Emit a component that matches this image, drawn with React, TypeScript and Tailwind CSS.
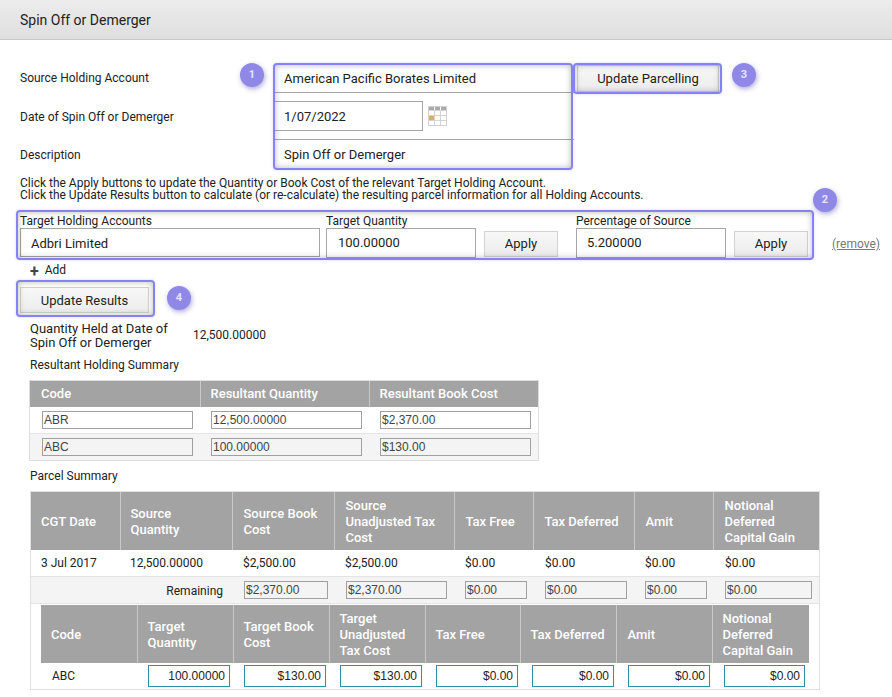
import { ReactNode } from 'react';

const parcelWidths = [89, 112, 102, 120, 79, 101, 79, 107];
const targetWidths = [96, 96, 96, 96, 95, 96, 96, 96];

function Badge({ n, className }: { n: number; className: string }) {
  return (
    <div className={`absolute flex h-6 w-6 items-center justify-center rounded-full bg-[#8f88e6] text-[11px] font-bold text-[#e6e4ff] shadow-[1px_2px_5px_rgba(80,70,170,0.45)] ${className}`}>
      {n}
    </div>
  );
}

function Highlight({ className }: { className: string }) {
  return (
    <div className={`pointer-events-none absolute rounded-[4px] border-2 border-[#8583f3] shadow-[inset_0_0_6px_rgba(0,0,0,0.28),0_0_3px_rgba(133,131,243,0.35)] ${className}`} />
  );
}

function Button({ children, className }: { children: ReactNode; className: string }) {
  return (
    <button className={`border border-[#d2d2d2] bg-gradient-to-b from-[#f8f8f8] to-[#ececec] text-[13px] text-[#222] ${className}`}>
      {children}
    </button>
  );
}

function GreyInput({ value, w }: { value: string; w: string }) {
  return (
    <input
      readOnly
      value={value}
      className={`h-[18px] border border-[#a0a0a0] bg-[#f4f4f4] pl-[1px] font-['Liberation_Sans',sans-serif] text-[12px] text-[#444] outline-none ${w}`}
    />
  );
}

function WhiteInput({ value }: { value: string }) {
  return (
    <input
      readOnly
      value={value}
      className="h-[18px] w-[151px] border border-[#a0a0a0] bg-white pl-[1px] font-['Liberation_Sans',sans-serif] text-[12px] text-[#444] outline-none"
    />
  );
}

function BlueInput({ value, w }: { value: string; w: string }) {
  return (
    <input
      readOnly
      value={value}
      className={`h-[22px] border border-[#2f8fa5] bg-white pr-[4px] text-right font-['Liberation_Sans',sans-serif] text-[12px] text-[#222] outline-none ${w}`}
    />
  );
}

function Th({ children, w, pl = 'pl-[10px]', pt = 'pt-[2px]' }: { children: ReactNode; w?: number; pl?: string; pt?: string }) {
  return (
    <th
      style={w ? { width: w } : undefined}
      className={`border-r border-[#c8c8c8] bg-[#a3a3a3] pr-1 text-left align-middle text-[13px] leading-4 font-medium text-white last:border-r-0 ${pl} ${pt}`}
    >
      {children}
    </th>
  );
}

function CalendarIcon() {
  return (
    <svg width="20" height="20" viewBox="0 0 20 20" className="ml-[5px]">
      <rect x="0.5" y="0.5" width="18" height="19" fill="#fff" stroke="#d0d0d0" />
      <rect x="1" y="1" width="5" height="3" fill="#aaa" />
      <rect x="7" y="1" width="5" height="3" fill="#aaa" />
      <rect x="13" y="1" width="5" height="3" fill="#aaa" />
      <path d="M1 4.5h17M1 9.5h17M1 14.5h17M6.5 4v15M12.5 4v15" stroke="#d4d4d4" fill="none" />
      <rect x="1" y="10" width="5" height="4" fill="#d9b552" />
    </svg>
  );
}

export default function App() {
  return (
    <div className="relative h-[697px] w-[892px] overflow-hidden bg-white font-['Roboto',sans-serif] text-[12px] text-[#222]">
      <div className="flex h-10 items-center border-b border-[#c6c6c6] bg-gradient-to-b from-[#ececec] to-[#dfdfdf] pt-[2px] pl-5 text-[14px] text-[#222]">
        Spin Off or Demerger
      </div>

      {/* Source / date / description */}
      <div className="mt-[23px] flex pl-5">
        <div className="w-[254px]">
          <div className="flex h-[30px] items-center">Source Holding Account</div>
          <div className="flex h-[47px] items-center">Date of Spin Off or Demerger</div>
          <div className="flex h-[29px] items-center">Description</div>
        </div>
        <div className="w-[300px] text-[13px]">
          <div className="flex h-[30px] items-center border-b border-[#a6a6a6] pt-[2px] pl-[10px]">American Pacific Borates Limited</div>
          <div className="flex h-[47px] items-center border-b border-[#a6a6a6]">
            <div className="flex h-[30px] w-[149px] items-center border border-[#a6a6a6] pt-[2px] pl-[9px]">1/07/2022</div>
            <CalendarIcon />
          </div>
          <div className="flex h-[29px] items-center pl-[10px]">Spin Off or Demerger</div>
        </div>
        <Button className="mt-[2px] ml-[3px] h-[27px] w-[142px]">Update Parcelling</Button>
      </div>

      <div className="mt-[8px] pl-5 leading-3">
        <p>Click the Apply buttons to update the Quantity or Book Cost of the relevant Target Holding Account.</p>
        <p>Click the Update Results button to calculate (or re-calculate) the resulting parcel information for all Holding Accounts.</p>
      </div>

      {/* Target holding row */}
      <div className="mt-[13px] flex items-start pl-5">
        <div className="w-[306px]">
          <div className="h-[14px] leading-[14px]">Target Holding Accounts</div>
          <div className="flex h-[29px] w-[300px] items-center border border-[#a6a6a6] pt-[2px] pl-[10px] text-[13px]">Adbri Limited</div>
        </div>
        <div className="w-[158px]">
          <div className="h-[14px] leading-[14px]">Target Quantity</div>
          <div className="flex h-[30px] w-[150px] items-center border border-[#a6a6a6] pl-[11px] text-[13px]">100.00000</div>
        </div>
        <Button className="mt-[17px] h-[26px] w-[74px]">Apply</Button>
        <div className="ml-[18px] w-[158px]">
          <div className="h-[14px] leading-[14px]">Percentage of Source</div>
          <div className="flex h-[30px] w-[150px] items-center border border-[#a6a6a6] pl-[10px] text-[13px]">5.200000</div>
        </div>
        <Button className="mt-[17px] h-[26px] w-[74px]">Apply</Button>
        <a className="mt-[21px] ml-[24px] text-[#777] underline">(remove)</a>
      </div>

      <div className="mt-[4px] flex h-[15px] items-center pl-[30px]">
        <span className="mt-[5px] text-[16px] font-bold text-[#444]">+</span>
        <span className="ml-[6px]">Add</span>
      </div>

      <div className="mt-[10px] pl-5">
        <Button className="h-[26px] w-[129px] pt-[2px]">Update Results</Button>
      </div>

      <div className="mt-[9px] flex items-center pl-[30px] text-[#222]">
        <div className="w-[163px] text-[13px] leading-[14px]">
          Quantity Held at Date of
          <br />
          Spin Off or Demerger
        </div>
        <div className="mb-[2px]">12,500.00000</div>
      </div>

      <div className="mt-[6px] pl-[30px]">Resultant Holding Summary</div>

      {/* Resultant summary */}
      <div className="mt-[6px] ml-[29px] w-[510px] border border-[#dedede]">
        <table className="w-full table-fixed border-collapse">
          <thead>
            <tr className="h-[26px]">
              <Th w={170} pl="pl-[11px]" pt="pt-0">Code</Th>
              <Th w={169} pt="pt-0">Resultant Quantity</Th>
              <Th pt="pt-0">Resultant Book Cost</Th>
            </tr>
          </thead>
          <tbody>
            <tr className="h-[26px] border-b border-[#e4e4e4]">
              <td className="pl-[12px]"><WhiteInput value="ABR" /></td>
              <td className="pl-[11px]"><WhiteInput value="12,500.00000" /></td>
              <td className="pl-[11px]"><WhiteInput value="$2,370.00" /></td>
            </tr>
            <tr className="h-[27px] bg-[#f4f4f4]">
              <td className="pl-[12px]"><GreyInput value="ABC" w="w-[151px]" /></td>
              <td className="pl-[11px]"><GreyInput value="100.00000" w="w-[151px]" /></td>
              <td className="pl-[11px]"><GreyInput value="$130.00" w="w-[151px]" /></td>
            </tr>
          </tbody>
        </table>
      </div>

      <div className="mt-[8px] pl-[30px] leading-[14px]">Parcel Summary</div>

      {/* Parcel summary */}
      <div className="mt-[8px] ml-[30px] w-[790px] border border-[#e0e0e0]">
        <table className="w-full table-fixed border-collapse">
          <thead>
            <tr className="h-[58px]">
              <Th w={parcelWidths[0]}>CGT Date</Th>
              <Th w={parcelWidths[1]}>Source<br />Quantity</Th>
              <Th w={parcelWidths[2]} pl="pl-[11px]">Source Book Cost</Th>
              <Th w={parcelWidths[3]} pl="pl-[11px]">Source Unadjusted Tax Cost</Th>
              <Th w={parcelWidths[4]} pl="pl-[11px]">Tax Free</Th>
              <Th w={parcelWidths[5]} pl="pl-[11px]">Tax Deferred</Th>
              <Th w={parcelWidths[6]} pl="pl-[11px]">Amit</Th>
              <Th pl="pl-[11px]">Notional Deferred Capital Gain</Th>
            </tr>
          </thead>
          <tbody>
            <tr className="h-[26px] border-b border-[#e4e4e4]">
              <td className="pl-[10px]">3 Jul 2017</td>
              <td className="pl-[10px]">12,500.00000</td>
              <td className="pl-[11px]">$2,500.00</td>
              <td className="pl-[11px]">$2,500.00</td>
              <td className="pl-[11px]">$0.00</td>
              <td className="pl-[12px]">$0.00</td>
              <td className="pl-[11px]">$0.00</td>
              <td className="pl-[12px]">$0.00</td>
            </tr>
            <tr className="h-[27px] border-b border-[#e4e4e4] bg-[#f4f4f4]">
              <td colSpan={2} className="pt-[2px] pr-[9px] text-right">Remaining</td>
              <td className="pl-[12px]"><GreyInput value="$2,370.00" w="w-[84px]" /></td>
              <td className="pl-[12px]"><GreyInput value="$2,370.00" w="w-[101px]" /></td>
              <td className="pl-[11px]"><GreyInput value="$0.00" w="w-[62px]" /></td>
              <td className="pl-[12px]"><GreyInput value="$0.00" w="w-[82px]" /></td>
              <td className="pl-[11px]"><GreyInput value="$0.00" w="w-[62px]" /></td>
              <td className="pl-[12px]"><GreyInput value="$0.00" w="w-[87px]" /></td>
            </tr>
            <tr>
              <td colSpan={8} className="pt-[1px] pr-[10px] pl-[10px]">
                <table className="w-[768px] table-fixed border-collapse">
                  <thead>
                    <tr className="h-[58px]">
                      <Th w={targetWidths[0]}>Code</Th>
                      <Th w={targetWidths[1]}>Target Quantity</Th>
                      <Th w={targetWidths[2]}>Target Book Cost</Th>
                      <Th w={targetWidths[3]}>Target Unadjusted Tax Cost</Th>
                      <Th w={targetWidths[4]}>Tax Free</Th>
                      <Th w={targetWidths[5]}>Tax Deferred</Th>
                      <Th w={targetWidths[6]} pl="pl-[11px]">Amit</Th>
                      <Th>Notional Deferred Capital Gain</Th>
                    </tr>
                  </thead>
                  <tbody>
                    <tr className="h-[26px]">
                      <td className="pl-[11px]">ABC</td>
                      <td className="pl-[11px]"><BlueInput value="100.00000" w="w-[82px]" /></td>
                      <td className="pl-[11px]"><BlueInput value="$130.00" w="w-[82px]" /></td>
                      <td className="pl-[11px]"><BlueInput value="$130.00" w="w-[82px]" /></td>
                      <td className="pl-[11px]"><BlueInput value="$0.00" w="w-[82px]" /></td>
                      <td className="pl-[12px]"><BlueInput value="$0.00" w="w-[82px]" /></td>
                      <td className="pl-[12px]"><BlueInput value="$0.00" w="w-[82px]" /></td>
                      <td className="pl-[12px]"><BlueInput value="$0.00" w="w-[81px]" /></td>
                    </tr>
                  </tbody>
                </table>
              </td>
            </tr>
          </tbody>
        </table>
      </div>

      {/* Tutorial callouts drawn over the form */}
      <Highlight className="top-[63px] left-[273px] h-[107px] w-[300px]" />
      <Highlight className="top-[63px] left-[573px] h-[31px] w-[149px]" />
      <Highlight className="top-[210px] left-[16px] h-[50px] w-[798px]" />
      <Highlight className="top-[280px] left-[16px] h-[37px] w-[139px]" />
      <Badge n={1} className="top-[63px] left-[240px]" />
      <Badge n={3} className="top-[63px] left-[732px]" />
      <Badge n={2} className="top-[188px] left-[813px]" />
      <Badge n={4} className="top-[286px] left-[167px]" />
    </div>
  );
}
